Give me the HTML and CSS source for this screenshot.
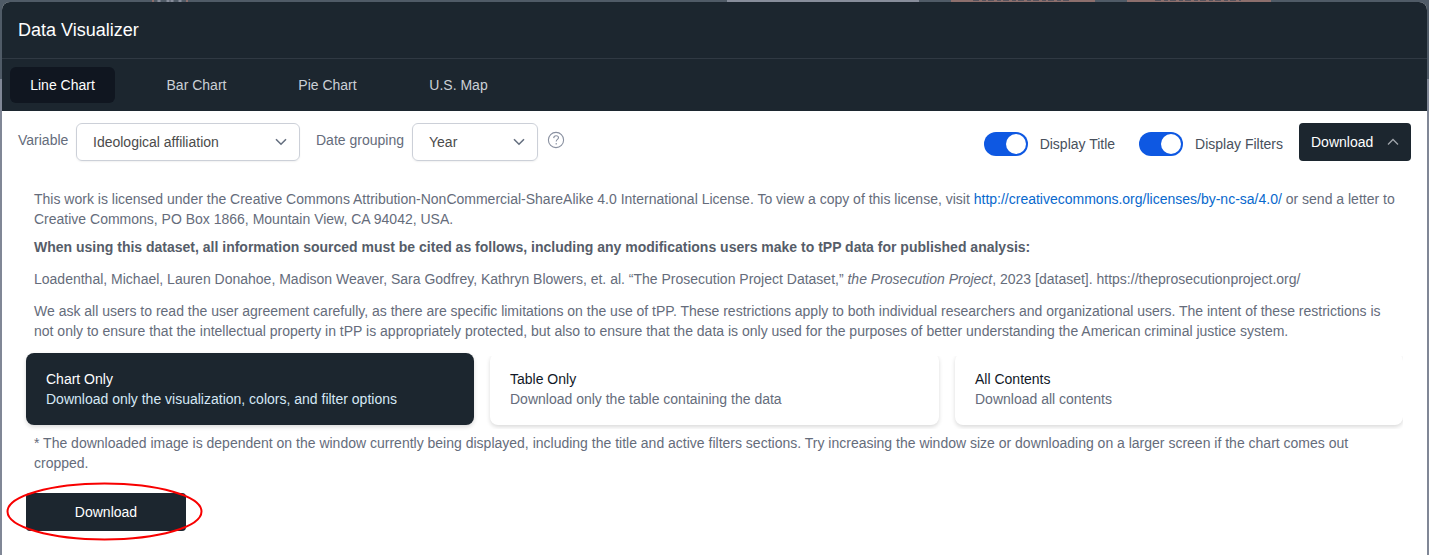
FILE: index.html
```html
<!DOCTYPE html>
<html lang="en">
<head>
<meta charset="utf-8">
<title>Data Visualizer</title>
<link rel="stylesheet" href="styles.css">
</head>
<body>
<div class="page">
  <div class="backdrop-bar" aria-hidden="true">
    <svg class="backdrop-logo" viewBox="0 0 40 2"><path class="logo-edge" d="M1 0v2M35 0v2"/><path class="logo-mark" d="M7 0v2M16 0v2M20 0v2M28 0v2"/></svg>
    <span class="backdrop-field"></span>
    <span class="backdrop-button"><svg class="backdrop-marks" viewBox="0 0 100 2"><path d="M0 .5h98"/></svg></span>
    <span class="backdrop-button"><svg class="backdrop-marks" viewBox="0 0 100 2"><path d="M6 .5h86"/></svg></span>
  </div>
  <main class="modal">
    <header class="modal-header"><h1 class="modal-title">Data Visualizer</h1></header>
    <nav class="tabs">
      <a class="tab tab-active">Line Chart</a>
      <a class="tab">Bar Chart</a>
      <a class="tab">Pie Chart</a>
      <a class="tab">U.S. Map</a>
    </nav>
    <section class="toolbar">
      <label class="label">Variable</label>
      <div class="select select-variable"><span>Ideological affiliation</span>
        <svg class="chevron" viewBox="0 0 12 8"><path d="M1 1.2l5 5 5-5"/></svg></div>
      <label class="label label-date">Date grouping</label>
      <div class="select select-date"><span>Year</span>
        <svg class="chevron" viewBox="0 0 12 8"><path d="M1 1.2l5 5 5-5"/></svg></div>
      <svg class="help" viewBox="0 0 18 18"><circle cx="9" cy="9" r="7.6"/><path d="M6.7 7.1C6.8 5.6 7.8 4.8 9.1 4.8c1.4 0 2.4.8 2.4 2 0 1.6-2.3 1.7-2.3 3.6M9.2 12.1v1.3"/></svg>
      <div class="toggles">
        <div class="toggle"><span class="switch"><span class="knob"></span></span><span>Display Title</span></div>
        <div class="toggle"><span class="switch"><span class="knob"></span></span><span>Display Filters</span></div>
      </div>
      <button class="menu-button"><span>Download</span>
        <svg class="chevron-up" viewBox="0 0 12 8"><path d="M1 6.5l5-5 5 5"/></svg></button>
    </section>
    <section class="panel">
      <div class="copy">
        <p class="para">This work is licensed under the Creative Commons Attribution-NonCommercial-ShareAlike 4.0 International License. To view a copy of this license, visit <a class="link">http://creativecommons.org/licenses/by-nc-sa/4.0/</a> or send a letter to<br>Creative Commons, PO Box 1866, Mountain View, CA 94042, USA.</p>
        <p class="para para-strong">When using this dataset, all information sourced must be cited as follows, including any modifications users make to tPP data for published analysis:</p>
        <p class="para">Loadenthal, Michael, Lauren Donahoe, Madison Weaver, Sara Godfrey, Kathryn Blowers, et. al. “The Prosecution Project Dataset,” <em>the Prosecution Project</em>, 2023 [dataset]. https://theprosecutionproject.org/</p>
        <p class="para">We ask all users to read the user agreement carefully, as there are specific limitations on the use of tPP. These restrictions apply to both individual researchers and organizational users. The intent of these restrictions is<br>not only to ensure that the intellectual property in tPP is appropriately protected, but also to ensure that the data is only used for the purposes of better understanding the American criminal justice system.</p>
      </div>
      <div class="options">
        <div class="option option-active"><div class="option-name">Chart Only</div><div class="option-text">Download only the visualization, colors, and filter options</div></div>
        <div class="option"><div class="option-name">Table Only</div><div class="option-text">Download only the table containing the data</div></div>
        <div class="option option-last"><div class="option-name">All Contents</div><div class="option-text">Download all contents</div></div>
      </div>
      <p class="note">* The downloaded image is dependent on the window currently being displayed, including the title and active filters sections. Try increasing the window size or downloading on a larger screen if the chart comes out<br>cropped.</p>
      <div class="action">
        <button class="download">Download</button>
        <svg class="ring" viewBox="0 0 198 60"><ellipse cx="98.5" cy="29.5" rx="97" ry="28"/></svg>
      </div>
    </section>
  </main>
</div>
</body>
</html>
```
FILE: styles.css
```css
* { box-sizing: border-box; }
body {
  margin: 0;
  font: 14px/20px "Liberation Sans", Arial, sans-serif;
  color: #656c7b;
  overflow: hidden;
}
.page {
  height: 555px;
  background: linear-gradient(#505b67 79px, #808796 79px);
  padding: 0 2px;
  overflow: hidden;
}
.backdrop-bar { display: flex; height: 2px; padding-left: 150px; }
.backdrop-logo { width: 40px; height: 2px; margin-right: 535px; }
.logo-edge { stroke: #8d6f6d; stroke-width: 2; }
.logo-mark { stroke: #878d9b; stroke-width: 3; }
.backdrop-field { width: 192px; background: #878d9b; margin-right: 32px; }
.backdrop-button { display: flex; justify-content: center; width: 144px; background: #8d6f6d; margin-right: 32px; }
.backdrop-marks { width: 100px; height: 2px; stroke: #59545e; stroke-width: 1; stroke-dasharray: 6 3 4 2; }
.modal { height: 553px; background: #fff; border-radius: 8px 8px 0 0; overflow: hidden; }
.modal-header {
  height: 57px;
  padding: 14px 16px;
  background: #1c262f;
  border-bottom: 1px solid #303943;
}
.modal-title { margin: 0; font-size: 18px; line-height: 28px; font-weight: 400; color: #fff; }
.tabs { display: flex; height: 52px; padding: 8px; background: #1c262f; }
.tab { width: 99px; height: 36px; margin-right: 32px; line-height: 36px; text-align: center; border-radius: 6px; color: #cbd0d6; }
.tab-active { width: 105px; background: #101620; color: #fff; }
.toolbar { display: flex; align-items: flex-start; height: 62px; padding: 12px 16px 0; }
.label { width: 58px; padding-top: 7px; white-space: nowrap; }
.label-date { width: 96px; margin-left: 16px; }
.select {
  display: flex; align-items: center; justify-content: space-between;
  height: 38px; padding: 0 12px 0 16px;
  border: 1px solid #ccd0d8; border-radius: 6px;
  box-shadow: 0 1px 2px rgba(0,0,0,.06);
  color: #4b4b4b;
}
.select-variable { width: 224px; }
.select-date { width: 126px; }
.chevron, .chevron-up { width: 12px; height: 8px; fill: none; stroke: #667080; stroke-width: 1.6; }
.chevron-up { stroke: #a0a5ab; stroke-width: 1.3; }
.help { width: 18px; height: 18px; margin: 8px 0 0 9px; fill: none; stroke: #8990a0; stroke-width: 1.1; }
.toggles { display: flex; gap: 24px; margin: 9px 16px 0 auto; color: #48505c; }
.toggle { display: flex; align-items: center; gap: 12px; white-space: nowrap; }
.switch { width: 44px; height: 24px; padding: 2px; border-radius: 12px; background: #0e58e2; display: flex; justify-content: flex-end; }
.knob { width: 20px; height: 20px; border-radius: 50%; background: #fff; }
.menu-button, .download { border: 0; border-radius: 4px; background: #1c262f; color: #fff; font: inherit; height: 38px; }
.menu-button { display: flex; align-items: center; justify-content: space-between; width: 112px; padding: 0 12px; }
.panel { padding: 16px 24px 0; }
.copy { padding: 0 8px; white-space: nowrap; }
.para { margin: 0 0 12px; }
.para-strong { margin-top: -4px; font-weight: 700; color: #565d69; }
.link { color: #0868cd; }
.options { display: grid; grid-template-columns: 448px 449px 448px; gap: 16px; }
.option { height: 72px; padding: 16px 20px; border-radius: 8px; background: #fff; box-shadow: 0 2px 4px rgba(0,0,0,.15); clip-path: inset(3px -4px -4px -4px); }
.option-last { clip-path: inset(3px 0 -4px -4px); }
.option-name { color: #111827; }
.option-active { background: #1c262f; color: #d5e8f5; clip-path: none; }
.option-active .option-name { color: #fff; }
.note { margin: 8px 8px 20px; white-space: nowrap; }
.action { position: relative; width: 160px; height: 38px; }
.download { width: 160px; }
.ring { position: absolute; left: -20px; top: -11px; width: 198px; height: 60px; fill: none; stroke: #f80000; stroke-width: 2; }
```
